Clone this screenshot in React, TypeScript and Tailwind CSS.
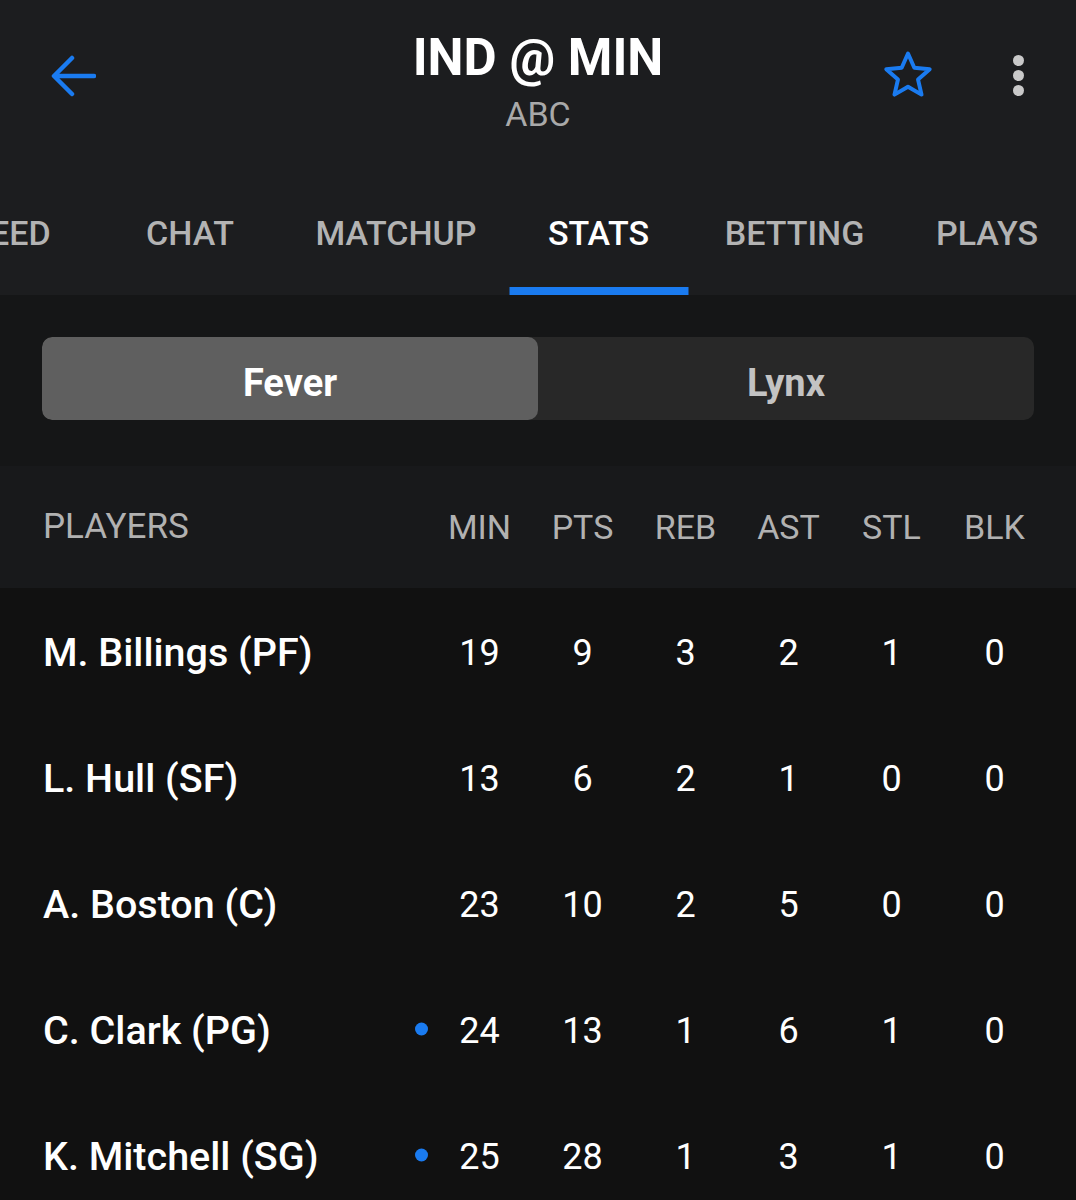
import React from "react";

const rows = [
  { name: "M. Billings (PF)", dot: false, s: ["19", "9", "3", "2", "1", "0"] },
  { name: "L. Hull (SF)", dot: false, s: ["13", "6", "2", "1", "0", "0"] },
  { name: "A. Boston (C)", dot: false, s: ["23", "10", "2", "5", "0", "0"] },
  { name: "C. Clark (PG)", dot: true, s: ["24", "13", "1", "6", "1", "0"] },
  { name: "K. Mitchell (SG)", dot: true, s: ["25", "28", "1", "3", "1", "0"] },
];

const cols = ["MIN", "PTS", "REB", "AST", "STL", "BLK"];

const tabs = [
  { label: "FEED", w: "w-[152px]", active: false },
  { label: "CHAT", w: "w-[206px]", active: false },
  { label: "MATCHUP", w: "w-[206px]", active: false },
  { label: "STATS", w: "w-[199px]", active: true },
  { label: "BETTING", w: "w-[193px]", active: false },
  { label: "PLAYS", w: "w-[192px]", active: false },
];

export default function App() {
  return (
    <div
      className="w-[1076px] h-[1200px] overflow-hidden bg-[#111111] text-white"
      style={{ fontFamily: "Roboto, 'Noto Sans', sans-serif" }}
    >
      {/* Top app bar */}
      <div className="bg-[#1c1d1f]">
        <div className="relative h-[160px] flex items-start justify-between pl-[50px] pr-[52px]">
          <div className="mt-[52px] w-[48px] h-[48px] flex items-center">
            <svg width="46" height="46" viewBox="0 0 46 46" fill="none">
              <path
                d="M44 23H6M22 5L4 23l18 18"
                stroke="#1a7bf0"
                strokeWidth="4.5"
                strokeLinecap="round"
                strokeLinejoin="round"
              />
            </svg>
          </div>
          <div className="absolute left-0 right-0 top-[28px] flex flex-col items-center pointer-events-none">
            <div className="text-[51px] leading-[60px] font-bold text-white">IND @ MIN</div>
            <div className="text-[34px] leading-[40px] mt-[6px] text-[#a9a9a9]">ABC</div>
          </div>
          <div className="flex items-center gap-[76px] mt-[47px]">
            <svg width="56" height="56" viewBox="0 0 24 24" fill="none">
              <path
                d="M12 2.8l2.7 6.1 6.6.6-5 4.4 1.5 6.5L12 17l-5.8 3.4 1.5-6.5-5-4.4 6.6-.6z"
                stroke="#1a7bf0"
                strokeWidth="1.7"
                strokeLinejoin="round"
              />
            </svg>
            <div className="flex flex-col gap-[4px] w-[12px] items-center">
              <span className="w-[11px] h-[11px] rounded-full bg-[#c9c9c9]" />
              <span className="w-[11px] h-[11px] rounded-full bg-[#c9c9c9]" />
              <span className="w-[11px] h-[11px] rounded-full bg-[#c9c9c9]" />
            </div>
          </div>
        </div>

        {/* Tabs */}
        <div className="h-[135px] flex overflow-hidden">
          <div className="flex -ml-[65px] shrink-0">
            {tabs.map((t) => (
              <div key={t.label} className={`${t.w} shrink-0 relative flex flex-col items-center`}>
                <div
                  className={`mt-[53px] text-[34px] leading-[40px] font-medium ${
                    t.active ? "text-white" : "text-[#b3b3b3]"
                  }`}
                >
                  {t.label}
                </div>
                {t.active && (
                  <div className="absolute bottom-0 left-1/2 -translate-x-1/2 w-[179px] h-[8px] bg-[#1a7bf0]" />
                )}
              </div>
            ))}
          </div>
        </div>
      </div>

      {/* Team toggle + header */}
      <div className="bg-[#151617]">
        <div className="px-[42px] pt-[42px]">
          <div className="h-[83px] flex rounded-[10px] bg-[#282828] overflow-hidden">
            <div className="w-1/2 bg-[#5f5f5f] rounded-[10px] flex items-center justify-center pt-[9px] text-[38px] font-bold text-white">
              Fever
            </div>
            <div className="w-1/2 flex items-center justify-center pt-[9px] text-[38px] font-bold text-[#c3c3c3]">
              Lynx
            </div>
          </div>
        </div>
        <div className="mt-[46px] h-[122px] bg-[#18191b] flex items-center pl-[43px] pr-[30px]">
          <div className="flex-1 text-[35px] text-[#b1b1b1]">PLAYERS</div>
          {cols.map((c) => (
            <div key={c} className="w-[103px] text-center text-[34px] text-[#b1b1b1]">
              {c}
            </div>
          ))}
        </div>
      </div>

      {/* Rows */}
      <div className="bg-[#111111]">
        {rows.map((r) => (
          <div key={r.name} className="h-[126px] flex items-center pl-[43px] pr-[30px]">
            <div className="flex-1 text-[39.5px] font-medium text-white whitespace-nowrap pt-[3px]">{r.name}</div>
            {r.s.map((v, i) => (
              <div key={i} className="w-[103px] relative text-center text-[36px] text-white pt-[3px]">
                {i === 0 && r.dot && (
                  <span className="absolute left-[-13px] top-1/2 -translate-y-1/2 w-[13px] h-[13px] rounded-full bg-[#1a7bf0]" />
                )}
                {v}
              </div>
            ))}
          </div>
        ))}
      </div>
    </div>
  );
}
